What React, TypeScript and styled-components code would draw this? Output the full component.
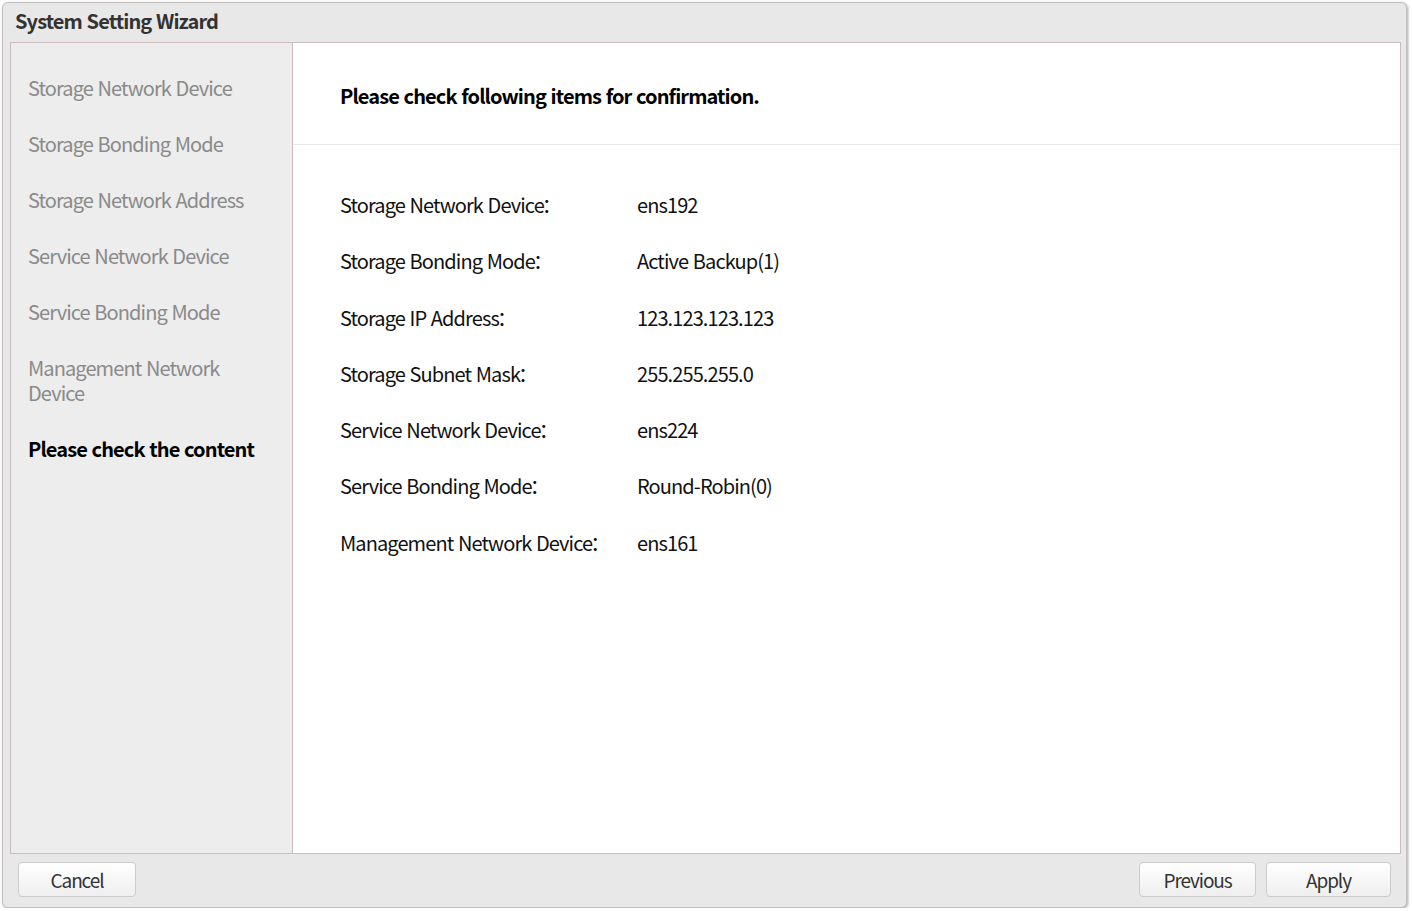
import React from "react";
import styled, { createGlobalStyle } from "styled-components";

const Global = createGlobalStyle`
  html, body { margin: 0; padding: 0; background: #ffffff; }
  body { font-family: "Noto Sans CJK SC", "Noto Sans", sans-serif; }
  * { box-sizing: border-box; }
`;

const Window = styled.div`
  margin: 2px 0 0 2px;
  width: 1405px;
  height: 906px;
  background: #e8e8e8;
  border: 1px solid #c4c0c0;
  border-radius: 6px;
  box-shadow: 1px 1px 3px rgba(0, 0, 0, 0.35);
  display: flex;
  flex-direction: column;
`;

const TitleBar = styled.div`
  height: 39px;
  flex: none;
  display: flex;
  align-items: center;
  padding-left: 12px;
  padding-bottom: 4px;
  font-size: 20px;
  font-weight: 700;
  color: #333333;
  letter-spacing: -0.9px;
  word-spacing: 1px;
`;

const Body = styled.div`
  flex: 1;
  margin: 0 5px 0 7px;
  border: 1px solid #cbbcbf;
  display: flex;
  min-height: 0;
`;

const Sidebar = styled.nav`
  width: 282px;
  flex: none;
  background: #ededed;
  border-right: 1px solid #cbbcbf;
  padding: 32px 20px 0 17px;
  display: flex;
  flex-direction: column;
  gap: 31px;
`;

const StepItem = styled.div<{ $active?: boolean }>`
  font-size: 20px;
  line-height: 25px;
  letter-spacing: -0.9px;
  word-spacing: 1px;
  color: ${(p) => (p.$active ? "#000000" : "#8a8a8a")};
  font-weight: ${(p) => (p.$active ? 700 : 400)};
`;

const Main = styled.main`
  flex: 1;
  background: #ffffff;
  display: flex;
  flex-direction: column;
`;

const MainHeader = styled.div`
  height: 102px;
  flex: none;
  border-bottom: 1px solid #e8e8e8;
  display: flex;
  align-items: center;
  padding-left: 47px;
  padding-top: 4px;
  font-size: 20px;
  font-weight: 700;
  color: #000000;
  letter-spacing: -0.9px;
  word-spacing: 1px;
`;

const List = styled.div`
  padding: 47px 0 0 47px;
  display: flex;
  flex-direction: column;
  gap: 31.3px;
`;

const Row = styled.div`
  display: grid;
  grid-template-columns: 297px 1fr;
  font-size: 20px;
  line-height: 25px;
  color: #111111;
  letter-spacing: -0.9px;
  word-spacing: 1px;
`;

const Colon = styled.span`
  margin-left: -2px;
`;

const Footer = styled.div`
  height: 53px;
  flex: none;
  display: flex;
  align-items: flex-start;
  padding: 8px 15px 0 15px;
  gap: 10px;
`;

const Spacer = styled.div`
  flex: 1;
`;

const Button = styled.button<{ $w: number }>`
  width: ${(p) => p.$w}px;
  height: 35px;
  border: 1px solid #cccccc;
  border-radius: 4px;
  background: linear-gradient(#ffffff, #efefef);
  font-family: "Noto Sans CJK SC", "Noto Sans", sans-serif;
  font-size: 19px;
  color: #333333;
  letter-spacing: -1.1px;
  padding: 0;
  cursor: pointer;
`;

const steps = [
  "Storage Network Device",
  "Storage Bonding Mode",
  "Storage Network Address",
  "Service Network Device",
  "Service Bonding Mode",
  "Management Network Device",
];

const rows: [string, string][] = [
  ["Storage Network Device", "ens192"],
  ["Storage Bonding Mode", "Active Backup(1)"],
  ["Storage IP Address", "123.123.123.123"],
  ["Storage Subnet Mask", "255.255.255.0"],
  ["Service Network Device", "ens224"],
  ["Service Bonding Mode", "Round-Robin(0)"],
  ["Management Network Device", "ens161"],
];

export default function App() {
  return (
    <>
      <Global />
      <Window>
        <TitleBar>System Setting Wizard</TitleBar>
        <Body>
          <Sidebar>
            {steps.map((s) => (
              <StepItem key={s}>{s}</StepItem>
            ))}
            <StepItem $active>Please check the content</StepItem>
          </Sidebar>
          <Main>
            <MainHeader>Please check following items for confirmation.</MainHeader>
            <List>
              {rows.map(([k, v]) => (
                <Row key={k}>
                  <span>
                    {k}
                    <Colon>：</Colon>
                  </span>
                  <span>{v}</span>
                </Row>
              ))}
            </List>
          </Main>
        </Body>
        <Footer>
          <Button $w={118}>Cancel</Button>
          <Spacer />
          <Button $w={117}>Previous</Button>
          <Button $w={125}>Apply</Button>
        </Footer>
      </Window>
    </>
  );
}
